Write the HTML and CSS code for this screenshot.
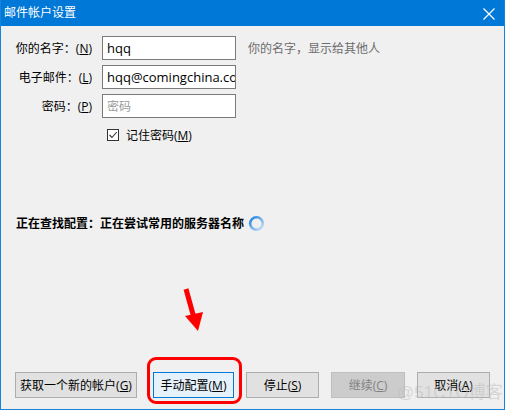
FILE: index.html
```html
<!DOCTYPE html>
<html>
<head>
<meta charset="utf-8">
<link rel="stylesheet" href="styles.css">
</head>
<body>
<div class="window">
  <div class="titlebar">
    <span class="title">邮件帐户设置</span>
    <svg class="close" width="12" height="12" viewBox="0 0 12 12"><path d="M0.5 0.5 L11.5 11.5 M11.5 0.5 L0.5 11.5" stroke="#fff" stroke-width="1.2"/></svg>
  </div>
  <div class="content">
    <div class="form">
      <label class="lbl">你的名字：(<u>N</u>)</label>
      <div class="input">hqq</div>
      <div class="hint">你的名字，显示给其他人</div>

      <label class="lbl">电子邮件：(<u>L</u>)</label>
      <div class="input">hqq@comingchina.com</div>
      <div></div>

      <label class="lbl">密码：(<u>P</u>)</label>
      <div class="input placeholder">密码</div>
      <div></div>

      <div></div>
      <div class="check">
        <svg class="box" width="12" height="12" viewBox="0 0 12 12"><rect x="0.5" y="0.5" width="11" height="11" fill="#fff" stroke="#333"/><path d="M2.5 6 L5 8.5 L9.8 3" fill="none" stroke="#333" stroke-width="1.1"/></svg>
        <span>记住密码(<u>M</u>)</span>
      </div>
      <div></div>
    </div>

    <div class="status">
      <span>正在查找配置：正在尝试常用的服务器名称</span>
      <svg class="spinner" width="17" height="17" viewBox="0 0 17 17">
        <defs>
          <linearGradient id="g" x1="0" y1="0" x2="1" y2="1">
            <stop offset="0" stop-color="#1a7fe0"/>
            <stop offset="1" stop-color="#cfe4f7"/>
          </linearGradient>
        </defs>
        <circle cx="8.5" cy="8.5" r="6.3" fill="none" stroke="url(#g)" stroke-width="2.6"/>
      </svg>
    </div>

    <div class="buttons">
      <button class="btn w-get">获取一个新的帐户(<u>G</u>)</button>
      <button class="btn btn-focus w-manual">手动配置(<u>M</u>)</button>
      <button class="btn w-stop">停止(<u>S</u>)</button>
      <button class="btn btn-disabled w-cont">继续(<u>C</u>)</button>
      <button class="btn w-cancel">取消(<u>A</u>)</button>
    </div>
  </div>

  <svg class="arrow" width="505" height="410" viewBox="0 0 505 410">
    <line x1="186" y1="289" x2="194" y2="318" stroke="#f00" stroke-width="5"/>
    <polygon points="185,316 203,312 198,331" fill="#f00"/>
  </svg>
  <div class="highlight"></div>
  <div class="watermark">@51CTO博客</div>
</div>
</body>
</html>
```

FILE: styles.css
```css
* { box-sizing: border-box; }
html, body { margin: 0; padding: 0; }
body {
  font-family: "Open Sans", "Noto Sans CJK SC", sans-serif;
  font-size: 12px;
  color: #000;
  background: #fff;
}
.window {
  position: relative;
  width: 505px;
  height: 410px;
  border: 1px solid #1883d7;
  border-top: none;
  background: #f0f0f0;
  display: flex;
  flex-direction: column;
  overflow: hidden;
}
.titlebar {
  height: 26px;
  background: #0078d7;
  color: #fff;
  display: flex;
  align-items: center;
  justify-content: space-between;
  padding: 0 10px 0 4px;
  margin: 0 -1px;
}
.title { font-size: 12px; line-height: 1; }
.close { display: block; margin-top: 1px; }
.content {
  flex: 1;
  display: flex;
  flex-direction: column;
}
.form {
  margin-top: 10px;
  display: grid;
  grid-template-columns: 91px 134px 1fr;
  grid-auto-rows: 24px;
  column-gap: 10px;
  row-gap: 5px;
}
.form .hint { margin-left: 2px; }
.lbl {
  display: flex;
  align-items: center;
  justify-content: flex-end;
  white-space: nowrap;
}
.input {
  background: #fff;
  border: 1px solid #7a7a7a;
  font-size: 13px;
  padding: 0 4px;
  display: flex;
  align-items: center;
  white-space: nowrap;
  overflow: hidden;
}
.placeholder { color: #9a9a9a; font-size: 12px; }
.hint {
  color: #6d6d6d;
  display: flex;
  align-items: flex-start;
  padding-top: 3px;
}
.check {
  display: flex;
  align-items: center;
  padding-left: 5px;
  gap: 7px;
  white-space: nowrap;
}
.box { display: block; }
.status {
  margin-top: 66px;
  padding-left: 15px;
  display: flex;
  align-items: center;
  gap: 4px;
  font-weight: bold;
  height: 20px;
}
.spinner { display: block; margin-top: 1px; }
.buttons {
  margin-top: auto;
  margin-bottom: 11px;
  padding-left: 14px;
  display: flex;
  align-items: center;
}
.btn {
  height: 26px;
  background: #e1e1e1;
  border: 1px solid #adadad;
  font-family: inherit;
  font-size: 12px;
  color: #000;
  padding: 0;
  margin: 0;
  margin-right: 11px;
}
.btn-focus { background: #e5f1fb; border-color: #0078d7; }
.btn-disabled { background: #cccccc; border-color: #bfbfbf; color: #838383; }
.w-get { width: 122px; margin-right: 16px; }
.w-manual { width: 81px; margin-right: 12px; }
.w-stop { width: 73px; margin-right: 12px; }
.w-cont { width: 74px; margin-right: 12px; }
.w-cancel { width: 73px; }
.arrow { position: absolute; left: -1px; top: 0; pointer-events: none; }
.highlight {
  position: absolute;
  left: 146px;
  top: 357px;
  width: 95px;
  height: 47px;
  border: 3.5px solid #f00;
  border-radius: 9px;
}
.watermark {
  position: absolute;
  left: 396px;
  top: 378px;
  font-size: 17px;
  color: rgba(190, 190, 190, 0.55);
  font-family: "Liberation Sans", "Noto Sans CJK SC", sans-serif;
  pointer-events: none;
}
```
